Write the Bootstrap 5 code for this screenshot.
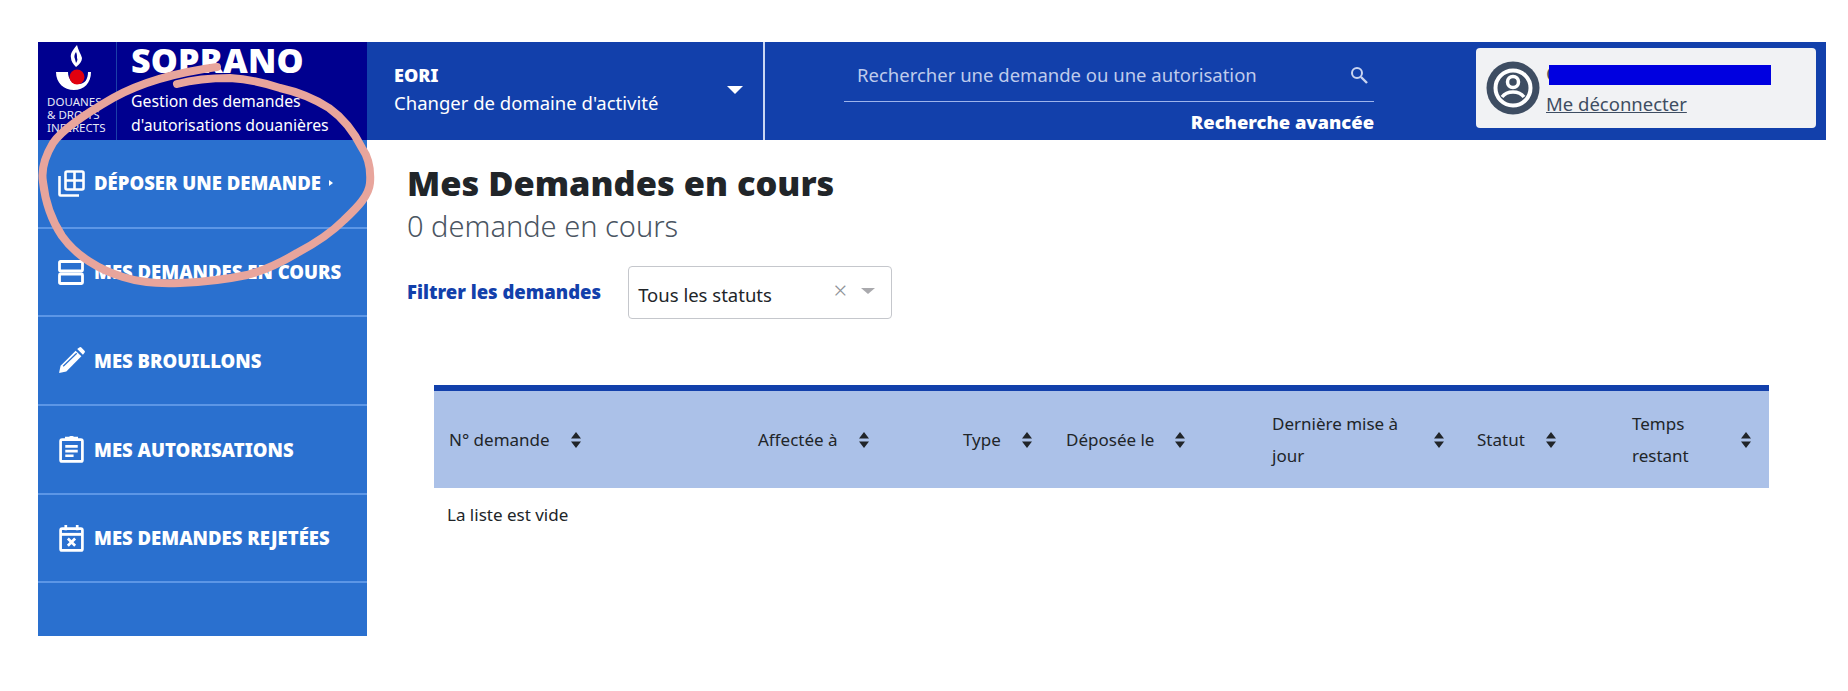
<!DOCTYPE html>
<html lang="fr">
<head>
<meta charset="utf-8">
<title>SOPRANO</title>
<link href="https://cdn.jsdelivr.net/npm/bootstrap@5.3.0/dist/css/bootstrap.min.css" rel="stylesheet">
<style>
body{font-family:"Noto Sans",sans-serif;background:#fff;color:#212529;font-size:16px;position:relative;min-height:691px}
.pg{margin:42px 22px 0 38px;width:1788px}
.hd{height:98px;background:#1240ab;color:#fff}
.brand{width:329px;background:#00008f}
.logo{width:79px;border-right:1px solid #1b3fa8;padding-top:2px}
.logo svg{display:block;margin-left:17px}
.logo-tx{font-size:11.5px;line-height:13px;color:#e6e9f6;padding-left:9px;margin-top:3px}
.brand-tx{padding-left:14px}
.brand-name{font-size:34px;font-weight:900;line-height:34px;letter-spacing:.2px;margin-top:1px}
.brand-sub{font-size:15.8px;line-height:24px;margin-top:12px}
.dom{width:398px;border-right:2px solid #c9d6f2;padding:0 20px 0 27px}
.dom b{font-weight:900;font-size:18px;line-height:28px;display:block}
.dom span{font-size:18.5px;line-height:28px;display:block}
.dom-tx{margin-top:-4px}
.caret-w{width:0;height:0;border-left:8px solid transparent;border-right:8px solid transparent;border-top:8px solid #fff;margin-top:-2px}
.srch{width:530px;margin-left:79px}
.srch-in{height:60px;border-bottom:1px solid #9db4ec;padding:6px 5px 0 13px;color:#bfcbec;font-size:18.5px}
.srch-adv{font-weight:900;font-size:18.4px;line-height:40px;text-align:right}
.usr{width:340px;height:80px;margin:6px 10px 0 auto;background:#f1f2f4;border-radius:4px;padding-left:10px;color:#3e4d62}
.usr-tx{margin-left:6px;width:260px}
.usr-top{position:relative;height:20px;margin-top:6px;margin-bottom:6px}
.usr-c{position:absolute;left:0;top:-6px;font-size:20px;line-height:30px}
.usr-mask{position:absolute;left:3px;top:0;width:222px;height:20px;background:#0000e0}
.usr-lk{font-size:18.5px;line-height:26px;color:#3e4d62}
.side{width:329px;height:496px;background:#2a70cf}
.side-it{height:88.7px;border-bottom:2px solid #5c96e6;padding-left:20px;color:#fff;font-weight:900;font-size:18.5px;gap:9px;text-decoration:none}
.side-ic{width:27px;height:27px;flex:none}
.tri{width:0;height:0;border-left:4px solid #fff;border-top:3.5px solid transparent;border-bottom:3.5px solid transparent;margin-left:-1px}
.cnt{width:1459px;padding-left:40px}
.ttl{font-size:34.4px;font-weight:900;line-height:44px;margin:21px 0 0;color:#212529}
.sub{font-size:29px;font-weight:300;line-height:38px;margin:2px 0 0;color:#4a5562}
.flt{margin-top:21px}
.flt-lb{color:#1240ab;font-weight:900;font-size:18.5px;margin-top:-1px}
.sel{margin-left:27px;width:264px;height:53px;border:1px solid #c5c7cc;border-radius:4px;padding:0 16px 0 9px;font-size:18.5px}
.sel-tx{padding-top:5px;flex:1}
.sel-x{color:#8f9298;font-size:24px;line-height:24px;margin-right:14px;margin-top:-6px;font-weight:300}
.sel-c{width:0;height:0;border-left:7px solid transparent;border-right:7px solid transparent;border-top:6px solid #a9a9ad;margin-top:-3px}
.tb-w{margin:66px 0 0 27px;width:1335px}
.dt{table-layout:fixed;width:100%;margin:0;border-collapse:separate;border-spacing:0}
.dt th{background:#abc1e8;font-weight:400;font-size:17px;line-height:32px;padding:16px 15px;height:103px;border:0;border-top:6px solid #1240ab;vertical-align:middle;color:#212529;box-shadow:none}
.dt td{border:0;font-size:17px;line-height:32px;padding:11px 13px;color:#212529}
.c1{width:309px}.c2{width:205px}.c3{width:103px}.c4{width:206px}.c5{width:205px}.c6{width:155px}.c7{width:152px}
.sort{flex:none;margin-left:20px}
.sort.far{margin-left:auto;margin-right:2px}
.wrap-lb{max-width:132px}
.anno{position:absolute;left:0;top:0;pointer-events:none}
</style>
</head>
<body>
<div class="pg">
  <header class="hd d-flex">
    <div class="brand d-flex">
      <div class="logo">
        <svg width="40" height="48" viewBox="0 0 40 48" aria-hidden="true">
          <path d="M22 1c-5 6-7 9-6 13 0 3 2 6 5 9 4-3 6-6 6-9-1-4-4-8-5-13z" fill="#fff"/>
          <path d="M21 8c-2 3-2 5-1 7l1 4c1-2 2-3 1-5 0-2 0-4-1-6z" fill="#00008f"/>
          <path d="M1 28h12c0 7 4 12 11 12 6 0 9-5 9-12h3c0 11-7 18-17 18S1 39 1 28z" fill="#fff"/>
          <circle cx="22" cy="33" r="7.500" fill="#e1000f"/>
        </svg>
        <div class="logo-tx">DOUANES<br>&amp; DROITS<br>INDIRECTS</div>
      </div>
      <div class="brand-tx">
        <div class="brand-name">SOPRANO</div>
        <div class="brand-sub">Gestion des demandes<br>d'autorisations douanières</div>
      </div>
    </div>
    <div class="dom d-flex align-items-center justify-content-between">
      <div class="dom-tx"><b>EORI</b><span>Changer de domaine d'activité</span></div>
      <div class="caret-w"></div>
    </div>
    <div class="srch">
      <div class="srch-in d-flex align-items-center justify-content-between">
        <span>Rechercher une demande ou une autorisation</span>
        <svg width="20" height="20" viewBox="0 0 20 20" aria-hidden="true"><circle cx="8" cy="8" r="5" fill="none" stroke="#c9d4f0" stroke-width="2"/><path d="M12 12l6 6" stroke="#c9d4f0" stroke-width="2.400"/></svg>
      </div>
      <div class="srch-adv">Recherche avancée</div>
    </div>
    <div class="usr d-flex align-items-center">
      <svg class="flex-none" width="54" height="54" viewBox="0 0 54 54" aria-hidden="true">
        <circle cx="27" cy="27" r="26.500" fill="#3e4d62"/>
        <circle cx="27" cy="27" r="17.500" fill="none" stroke="#fff" stroke-width="4"/>
        <circle cx="27" cy="21" r="5.500" fill="none" stroke="#fff" stroke-width="3.500"/>
        <path d="M16 36c3-4 7-5 11-5s8 1 11 5" fill="none" stroke="#fff" stroke-width="3.500"/>
      </svg>
      <div class="usr-tx">
        <div class="usr-top"><span class="usr-c">C</span><div class="usr-mask"></div></div>
        <a class="usr-lk" href="#">Me déconnecter</a>
      </div>
    </div>
  </header>
  <div class="d-flex">
    <nav class="side d-flex flex-column">
      <a class="side-it d-flex align-items-center" href="#">
        <svg class="side-ic" viewBox="0 0 27 27" fill="none" stroke="#fff" stroke-width="2.600" aria-hidden="true"><rect x="7.500" y="1.500" width="18" height="18" rx="1.500"/><path d="M16.500 1.500v18M7.500 10.500h18"/><path d="M1.500 6v18.500a1 1 0 0 0 1 1H21"/></svg>
        <span>DÉPOSER UNE DEMANDE</span><span class="tri"></span>
      </a>
      <a class="side-it d-flex align-items-center" href="#">
        <svg class="side-ic" viewBox="0 0 27 27" fill="none" stroke="#fff" stroke-width="2.800" aria-hidden="true"><rect x="1.500" y="2.500" width="23" height="9.500" rx="1"/><rect x="1.500" y="15" width="23" height="9.500" rx="1"/></svg>
        <span>MES DEMANDES EN COURS</span>
      </a>
      <a class="side-it d-flex align-items-center" href="#">
        <svg class="side-ic" viewBox="0 0 26 26" fill="#fff" aria-hidden="true"><path d="M1 25l1.500-7L17 3.500l5.500 5.500L8 23.500z"/><path d="M18.500 2l2-1.500a1.500 1.500 0 0 1 2 0l3 3a1.500 1.500 0 0 1 0 2l-1.500 2z"/><path d="M5 18.500L18 6" stroke="#2a70cf" stroke-width="1.200"/></svg>
        <span>MES BROUILLONS</span>
      </a>
      <a class="side-it d-flex align-items-center" href="#">
        <svg class="side-ic" viewBox="0 0 26 26" fill="none" stroke="#fff" stroke-width="2.600" aria-hidden="true"><rect x="2.500" y="3.500" width="21" height="21" rx="1.500"/><path d="M8 3.500V2h3l2-1 2 1h3v1.500" fill="#fff"/><path d="M7 10h12M7 14.500h12M7 19h8"/></svg>
        <span>MES AUTORISATIONS</span>
      </a>
      <a class="side-it d-flex align-items-center" href="#">
        <svg class="side-ic" viewBox="0 0 26 26" fill="none" stroke="#fff" stroke-width="2.600" aria-hidden="true"><rect x="2.500" y="3.500" width="21" height="21" rx="1.500"/><path d="M2.500 9h21" stroke-width="2.800"/><path d="M7.500 0v5M18.500 0v5"/><path d="M9.500 13l7 7M16.500 13l-7 7"/></svg>
        <span>MES DEMANDES REJETÉES</span>
      </a>
    </nav>
    <main class="cnt">
      <h1 class="ttl">Mes Demandes en cours</h1>
      <p class="sub">0 demande en cours</p>
      <div class="flt d-flex align-items-center">
        <div class="flt-lb">Filtrer les demandes</div>
        <div class="sel d-flex align-items-center">
          <span class="sel-tx">Tous les statuts</span>
          <span class="sel-x">×</span>
          <span class="sel-c"></span>
        </div>
      </div>
      <div class="tb-w">
        <table class="table dt">
          <colgroup><col class="c1"><col class="c2"><col class="c3"><col class="c4"><col class="c5"><col class="c6"><col class="c7"></colgroup>
          <thead>
            <tr>
              <th><div class="d-flex align-items-center"><span>N° demande</span><svg class="sort" width="12" height="18" viewBox="0 0 12 18"><path d="M6 1l5 6.500H1zM6 17l5-6.500H1z" fill="#212529"/></svg></div></th>
              <th><div class="d-flex align-items-center"><span>Affectée à</span><svg class="sort" width="12" height="18" viewBox="0 0 12 18"><path d="M6 1l5 6.500H1zM6 17l5-6.500H1z" fill="#212529"/></svg></div></th>
              <th><div class="d-flex align-items-center"><span>Type</span><svg class="sort" width="12" height="18" viewBox="0 0 12 18"><path d="M6 1l5 6.500H1zM6 17l5-6.500H1z" fill="#212529"/></svg></div></th>
              <th><div class="d-flex align-items-center"><span>Déposée le</span><svg class="sort" width="12" height="18" viewBox="0 0 12 18"><path d="M6 1l5 6.500H1zM6 17l5-6.500H1z" fill="#212529"/></svg></div></th>
              <th><div class="d-flex align-items-center"><span class="wrap-lb">Dernière mise à jour</span><svg class="sort far" width="12" height="18" viewBox="0 0 12 18"><path d="M6 1l5 6.500H1zM6 17l5-6.500H1z" fill="#212529"/></svg></div></th>
              <th><div class="d-flex align-items-center"><span>Statut</span><svg class="sort" width="12" height="18" viewBox="0 0 12 18"><path d="M6 1l5 6.500H1zM6 17l5-6.500H1z" fill="#212529"/></svg></div></th>
              <th><div class="d-flex align-items-center"><span class="wrap-lb">Temps restant</span><svg class="sort far" width="12" height="18" viewBox="0 0 12 18"><path d="M6 1l5 6.500H1zM6 17l5-6.500H1z" fill="#212529"/></svg></div></th>
            </tr>
          </thead>
          <tbody><tr><td colspan="7">La liste est vide</td></tr></tbody>
        </table>
      </div>
    </main>
  </div>
</div>
<svg class="anno" width="400" height="300" viewBox="0 0 400 300" aria-hidden="true">
  <path d="M217 67C180 72 145 80 113 98C85 114 62 130 53 143C44 158 41 170 43 182C45 200 50 218 62 236C76 256 100 270 123 277C142 283 160 284 180 283C205 282 228 279 247 275C266 270 282 262 297 253C316 243 331 233 344 220C359 206 369 195 370 183C371 170 369 158 362 148C353 130 343 118 329 108C315 99 298 92 280 88C262 82 245 79 230 78C210 78 192 80 177 84" fill="none" stroke="#e8a59c" stroke-width="8" stroke-linecap="round"/>
</svg>
<script src="https://cdn.jsdelivr.net/npm/bootstrap@5.3.0/dist/js/bootstrap.bundle.min.js"></script>
</body>
</html>
